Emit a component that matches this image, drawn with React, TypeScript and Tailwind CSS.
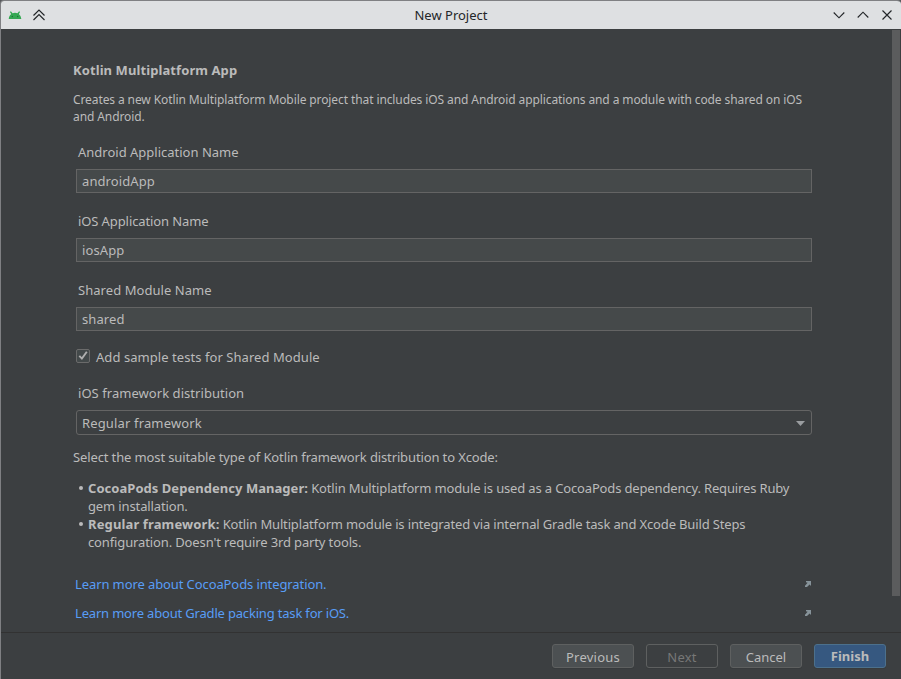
import React from "react";

function Field({ label, value, tracking = "" }: { label: string; value: string; tracking?: string }) {
  return (
    <div className="h-[69px]">
      <div className={"h-[26px] pl-[5px] leading-[18px] " + tracking}>{label}</div>
      <div className="ml-[3px] h-[24px] w-[736px] border border-[#646464] bg-[#45494a] pl-[5px] leading-[23px] tracking-[0.1px]">{value}</div>
    </div>
  );
}

function LinkRow({ text, tracking }: { text: string; tracking: string }) {
  return (
    <div className="flex h-[29px] w-[738px] items-start justify-between pl-[2px] leading-[18px] text-[#589df6]">
      <a className={tracking}>{text}</a>
      <svg className="mt-[6px]" width="6" height="6" viewBox="0 0 6 6">
        <path d="M1 0H6V5L4.6 3.6L2 6H0V4.7L2.6 1.8L1 1.2Z" fill="#87939a" />
      </svg>
    </div>
  );
}

export default function App() {
  const btn = "h-[24px] rounded-[3px] border text-center shadow-[0_1px_0_#383b3d]";
  return (
    <div className="h-[679px] w-[901px] overflow-hidden bg-[#55575b] font-['Noto_Sans',sans-serif] text-[13px] text-[#bbbbbb]">
      <div className="flex h-full flex-col overflow-hidden rounded-t-[4px] border-l border-t border-[#7f8083] bg-[#3c3f41]">
        <header className="flex h-[28px] shrink-0 items-center justify-between bg-[#dee0e2] pl-[7px] pr-[8px] text-[#232629]">
          <div className="flex w-[70px] items-center gap-[12px]">
            <svg width="14" height="14" viewBox="0 0 14 14">
              <path d="M.7 11C.9 8.7 1.9 7 3.2 5.9L1.9 3.9L2.9 3.2L4.5 5.2Q7 4.4 9.5 5.2L11.1 3.2L12.1 3.9L10.8 5.9C12.1 7 13.1 8.7 13.3 11Z" fill="#34a853" />
              <circle cx="4.3" cy="8.5" r=".7" fill="#1f6e38" />
              <circle cx="9.7" cy="8.5" r=".7" fill="#1f6e38" />
            </svg>
            <svg className="-ml-[1px]" width="12" height="12" viewBox="0 0 12 12" fill="none" stroke="#232629" strokeWidth="1.15"><path d="M.5 6.5l5.5-5.5 5.5 5.5M.5 11l5.5-5.5 5.5 5.5" /></svg>
          </div>
          <div className="pl-[1px] pt-[1px]">New Project</div>
          <div className="flex w-[70px] items-center justify-end gap-[12px]">
            <svg width="12" height="12" viewBox="0 0 12 12" fill="none" stroke="#232629" strokeWidth="1.15"><path d="M.7 3.5L6 8.8l5.3-5.3" /></svg>
            <svg width="12" height="12" viewBox="0 0 12 12" fill="none" stroke="#232629" strokeWidth="1.15"><path d="M.7 8.5L6 3.2l5.3 5.3" /></svg>
            <svg width="12" height="12" viewBox="0 0 12 12" fill="none" stroke="#232629" strokeWidth="1.15"><path d="M1.5 1.5l9 9M10.5 1.5l-9 9" /></svg>
          </div>
        </header>
        <div className="flex h-[603px] shrink-0 justify-between">
          <main className="w-[815px] pl-[72px] pt-[32px]">
            <h1 className="h-[30px] font-bold leading-[18px] tracking-[0.09px]">Kotlin Multiplatform App</h1>
            <p className="h-[52px] whitespace-nowrap text-[12px] leading-[17px] tracking-[-0.1px]">Creates a new Kotlin Multiplatform Mobile project that includes iOS and Android applications and a module with code shared on iOS<br />and Android.</p>
            <Field label="Android Application Name" value="androidApp" />
            <Field label="iOS Application Name" value="iosApp" tracking="tracking-[-0.1px]" />
            <Field label="Shared Module Name" value="shared" tracking="tracking-[0.05px]" />
            <div className="-mt-[2px] flex h-[38px] items-start pl-[3px]">
              <div className="mt-[1px] size-[14px] rounded-[2px] border border-[#6b6b6b] bg-[#43494a]">
                <svg width="12" height="12" viewBox="0 0 12 12" fill="none" stroke="#b0b0b0" strokeWidth="1.9"><path d="M2.3 5.8L4.9 8.6L9.8 1.8" /></svg>
              </div>
              <div className="ml-[6px] leading-[18px] tracking-[0.06px]">Add sample tests for Shared Module</div>
            </div>
            <div className="-mt-[2px] h-[26px] pl-[5px] leading-[18px] tracking-[0.05px]">iOS framework distribution</div>
            <div className="ml-[3px] flex h-[25px] w-[736px] items-center justify-between rounded-[3px] border border-[#646464] pl-[5px] pr-[6px] leading-[23px]">
              <span className="pt-px tracking-[0.15px]">Regular framework</span>
              <svg className="mt-[2px]" width="9" height="5" viewBox="0 0 9 5"><path d="M0 0H9L4.5 5Z" fill="#9a9da0" /></svg>
            </div>
            <p className="mt-[13px] h-[31px] leading-[18px] tracking-[-0.127px]">Select the most suitable type of Kotlin framework distribution to Xcode:</p>
            <ul className="h-[96px] whitespace-nowrap leading-[18px] tracking-[-0.15px]">
              {[
                ["CocoaPods Dependency Manager:", "Kotlin Multiplatform module is used as a CocoaPods dependency. Requires Ruby", "gem installation.", "tracking-[0.04px]"],
                ["Regular framework:", "Kotlin Multiplatform module is integrated via internal Gradle task and Xcode Build Steps", "configuration. Doesn't require 3rd party tools.", "tracking-[0.13px]"],
              ].map(([name, first, second, tracking]) => (
                <li key={name} className="flex">
                  <span className="mt-[7px] ml-[6px] mr-[5px] size-[4px] shrink-0 rounded-full bg-[#bbbbbb]" />
                  <span><b className={tracking}>{name}</b> {first}<br /><span className="tracking-[-0.13px]">{second}</span></span>
                </li>
              ))}
            </ul>
            <LinkRow text="Learn more about CocoaPods integration." tracking="tracking-[-0.1px]" />
            <LinkRow text="Learn more about Gradle packing task for iOS." tracking="tracking-[-0.18px]" />
          </main>
          <div className="mt-px mr-px h-[566px] w-[8px] bg-[#5b5c5d]" />
        </div>
        <footer className="flex flex-1 gap-[12px] border-t border-[#323232] pl-[551px] pt-[11px]">
          <div className={btn + " w-[82px] border-[#5e6060] bg-[#4c5052] leading-[25px] tracking-[0.25px]"}>Previous</div>
          <div className={btn + " w-[72px] border-[#5e6060] leading-[25px] tracking-[0.2px] text-[#777777]"}>Next</div>
          <div className={btn + " w-[72px] border-[#5e6060] bg-[#4c5052] leading-[25px]"}>Cancel</div>
          <div className={btn + " w-[72px] border-[#4c708c] bg-[#365880] font-bold leading-[23px]"}>Finish</div>
        </footer>
      </div>
    </div>
  );
}
